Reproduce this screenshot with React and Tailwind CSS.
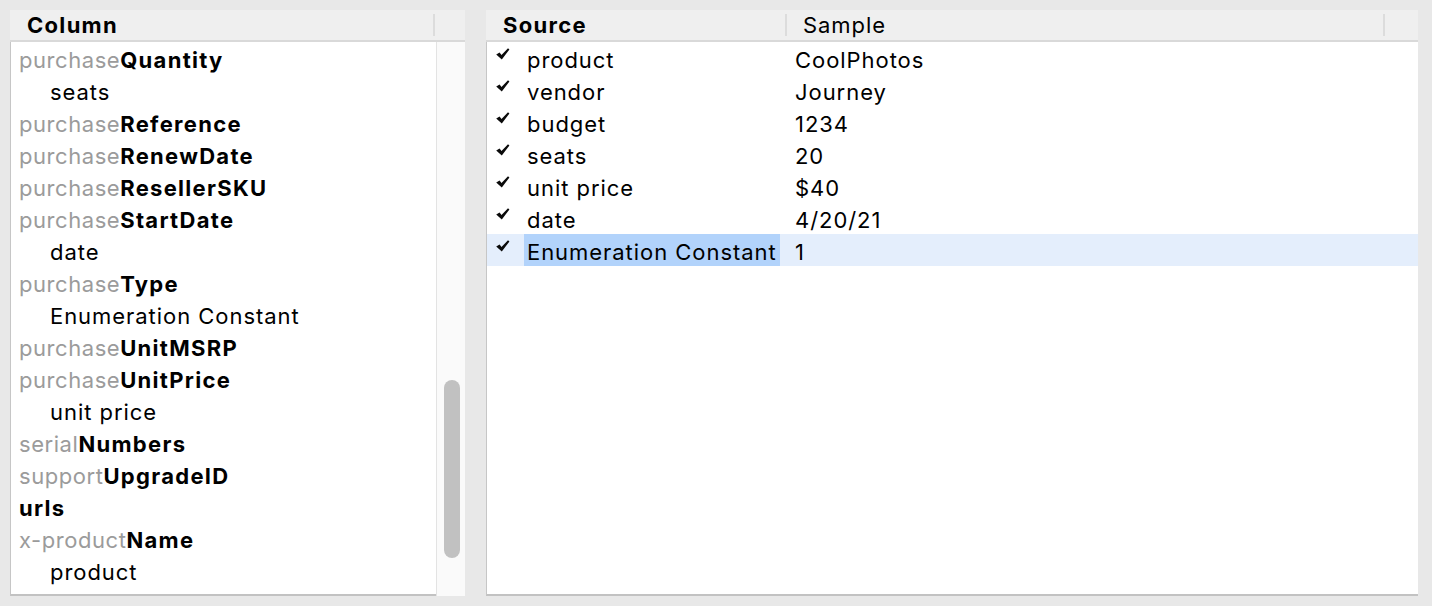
const columnRows = [
  { prefix: 'purchase', name: 'Quantity' },
  { sub: 'seats' },
  { prefix: 'purchase', name: 'Reference' },
  { prefix: 'purchase', name: 'RenewDate' },
  { prefix: 'purchase', name: 'ResellerSKU' },
  { prefix: 'purchase', name: 'StartDate' },
  { sub: 'date' },
  { prefix: 'purchase', name: 'Type' },
  { sub: 'Enumeration Constant' },
  { prefix: 'purchase', name: 'UnitMSRP' },
  { prefix: 'purchase', name: 'UnitPrice' },
  { sub: 'unit price' },
  { prefix: 'serial', name: 'Numbers' },
  { prefix: 'support', name: 'UpgradeID' },
  { prefix: '', name: 'urls' },
  { prefix: 'x-product', name: 'Name' },
  { sub: 'product' },
  { prefix: 'x-product', name: 'URL' },
];

const sourceRows = [
  { source: 'product', sample: 'CoolPhotos' },
  { source: 'vendor', sample: 'Journey' },
  { source: 'budget', sample: '1234' },
  { source: 'seats', sample: '20' },
  { source: 'unit price', sample: '$40' },
  { source: 'date', sample: '4/20/21' },
  { source: 'Enumeration Constant', sample: '1', selected: true },
];

function Check() {
  return (
    <svg width="14" height="12" viewBox="0 0 14 12" className="mt-[6px] shrink-0">
      <path d="M0.2 6.4 L3.6 4.4 L5.5 6.9 L12 0.2 L13.4 1.6 L5.8 11.4 Z" fill="#0a0a0a" />
    </svg>
  );
}

function HeaderSep() {
  return <div className="w-[2px] h-[22px] bg-[#dcdcdc] shrink-0" />;
}

export default function App() {
  return (
    <div
      className="w-[1432px] h-[606px] bg-[#e8e8e8] flex pt-[10px] pl-[10px] gap-[21px] overflow-hidden text-[22px] text-black leading-none tracking-[0.95px]"
      style={{ fontFamily: 'Inter, "Noto Sans", sans-serif' }}
    >
      {/* Column list */}
      <div className="w-[455px] h-[586px] flex flex-col">
        <div className="h-[30px] bg-[#efefef] flex items-center shrink-0">
          <div className="w-[423px] pl-[17px] font-bold tracking-[1.3px]">Column</div>
          <HeaderSep />
        </div>
        <div className="h-[2px] bg-[#d9d9d9] shrink-0" />
        <div className="flex flex-1 min-h-0">
          <div className="w-[426px] bg-white border-l border-[#c6c6c6] border-b-2 border-b-[#c2c2c2] overflow-hidden">
            {columnRows.map((row, i) =>
              row.sub ? (
                <div key={i} className="h-[32px] flex items-center pt-[3px] pl-[39px] whitespace-nowrap">
                  {row.sub}
                </div>
              ) : (
                <div key={i} className="h-[32px] flex items-center pt-[3px] pl-[8px] whitespace-nowrap">
                  <span className="text-[#9b9b9b] tracking-[0.55px]">{row.prefix}</span>
                  <span className="font-bold tracking-[1.3px]">{row.name}</span>
                </div>
              )
            )}
          </div>
          <div className="w-[29px] bg-[#fafafa] border-l border-[#e3e3e3]">
            <div className="ml-[7px] mt-[338px] w-[16px] h-[178px] rounded-full bg-[#c1c1c1]" />
          </div>
        </div>
      </div>

      {/* Source / Sample table */}
      <div className="w-[932px] h-[586px] flex flex-col">
        <div className="h-[30px] bg-[#efefef] flex items-center shrink-0">
          <div className="w-[299px] pl-[17px] font-bold tracking-[1.3px]">Source</div>
          <HeaderSep />
          <div className="w-[596px] pl-[16px]">Sample</div>
          <HeaderSep />
        </div>
        <div className="h-[2px] bg-[#d9d9d9] shrink-0" />
        <div className="flex-1 bg-white border-l border-[#c6c6c6] border-b-2 border-b-[#c2c2c2] overflow-hidden">
          {sourceRows.map((row, i) => (
            <div
              key={i}
              className={`h-[32px] flex items-start pl-[9px] whitespace-nowrap ${row.selected ? 'bg-[#e4eefc]' : ''}`}
            >
              <Check />
              <div className="ml-[14px] w-[264px] h-[32px] flex items-center">
                <span className={`px-[3px] h-[32px] pt-[3px] flex items-center ${row.selected ? 'bg-[#b2d3fb]' : ''}`}>
                  {row.source}
                </span>
              </div>
              <div className="h-[32px] pt-[3px] flex items-center pl-[7px]">{row.sample}</div>
            </div>
          ))}
        </div>
      </div>
    </div>
  );
}
